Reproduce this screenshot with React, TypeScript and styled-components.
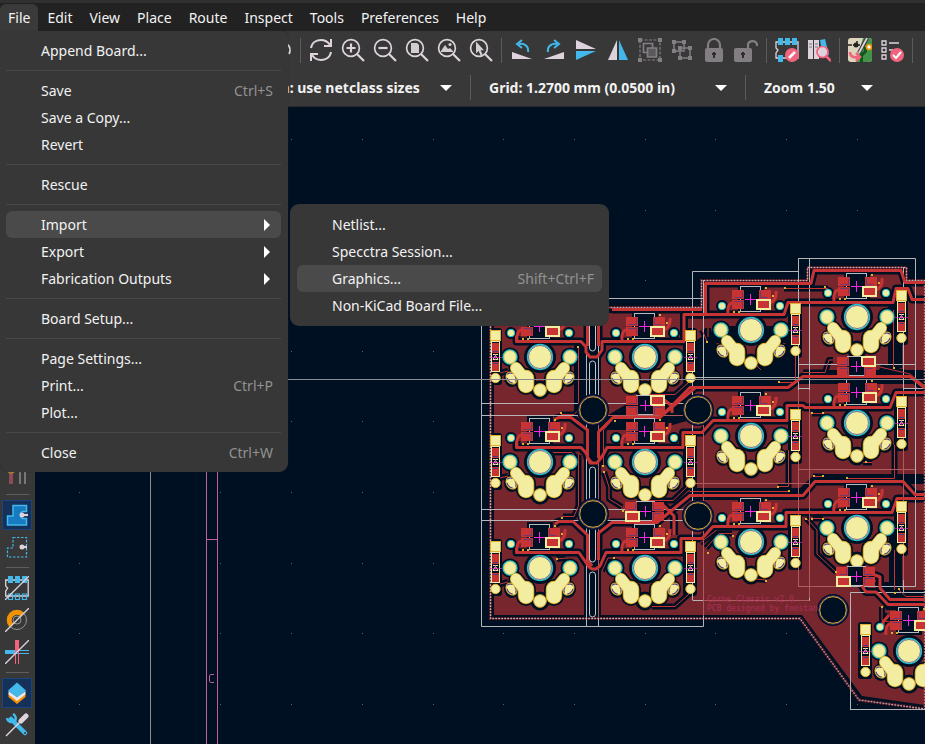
import React from "react";
import styled, { createGlobalStyle, css } from "styled-components";

const GlobalStyle = createGlobalStyle`
  * { box-sizing: border-box; }
  body {
    margin: 0;
    background: #001023;
    font-family: "Noto Sans", "Open Sans", sans-serif;
    font-size: 14px;
    color: #f2f2f2;
  }
  button, select { font: inherit; color: inherit; }
`;

const Page = styled.div`
  position: relative;
  display: flex;
  flex-direction: column;
  height: 100vh;
  overflow: hidden;
`;

const MenuBar = styled.nav`
  display: flex;
  flex: none;
  gap: 1px;
  height: 31px;
  padding-top: 1px;
  border-top: 3px solid #303030;
  background: #222222;
`;

const MenuTab = styled.button<{ $open?: boolean }>`
  border: 0;
  padding: 0 8px;
  line-height: 26px;
  border-radius: 6px 6px 0 0;
  background: ${(p) => (p.$open ? "#3a3a3a" : "transparent")};
`;

const ToolRow = styled.div`
  display: flex;
  flex: none;
  align-items: center;
  height: 38px;
  padding-left: 264px;
  background: #383838;
  overflow: hidden;
`;

const ToolButton = styled.button<{ $dim?: boolean }>`
  display: flex;
  flex: none;
  align-items: center;
  justify-content: center;
  width: 32px;
  height: 32px;
  padding: 0;
  border: 0;
  background: transparent;
  opacity: ${(p) => (p.$dim ? 0.45 : 1)};
`;

const Divider = styled.span`
  flex: none;
  width: 1px;
  height: 25px;
  margin: 0 4px;
  background: #5c5c5c;
`;

const ChoiceRow = styled(ToolRow)`
  padding-left: 254px;
  border-bottom: 1px solid #2b2b2b;
`;

const Choice = styled.label<{ $width: number }>`
  display: flex;
  flex: none;
  align-items: center;
  width: ${(p) => p.$width}px;
  padding: 0 14px;
`;

const ChoiceSelect = styled.select`
  flex: 1;
  min-width: 0;
  padding: 0;
  border: 0;
  appearance: none;
  background: transparent;
  font-weight: 700;
`;

const Work = styled.div`
  display: flex;
  flex: 1;
  min-height: 0;
`;

const SideBar = styled.aside`
  display: flex;
  flex: none;
  flex-direction: column;
  justify-content: flex-end;
  gap: 2px;
  width: 35px;
  padding: 0 2px 4px;
  background: #383838;
`;

const SideButton = styled.button<{ $on?: boolean }>`
  display: flex;
  flex: none;
  align-items: center;
  justify-content: center;
  width: 30px;
  height: 30px;
  padding: 0;
  border: 1px solid ${(p) => (p.$on ? "#1d4478" : "transparent")};
  background: ${(p) => (p.$on ? "#15315a" : "transparent")};
`;

const SideRule = styled.span`
  flex: none;
  height: 1px;
  margin: 3px 4px;
  background: #5e5e5e;
`;

const Canvas = styled.main`
  flex: 1;
  min-width: 0;
  background: #001023;
  svg { display: block; width: 100%; height: 100%; }
`;

const menuPanel = css`
  position: absolute;
  display: flex;
  flex-direction: column;
  background: #373737;
`;

const FileMenu = styled.div`
  ${menuPanel}
  top: 31px;
  left: 0;
  width: 288px;
  padding: 6px 7px 6px 6px;
  border-radius: 0 6px 9px 9px;
  box-shadow: 0 0 1px #222222;
`;

const SubMenu = styled.div`
  ${menuPanel}
  top: -7px;
  left: 284px;
  width: 319px;
  padding: 7px;
  border-radius: 9px;
`;

const ItemWrap = styled.div`
  position: relative;
`;

const Item = styled.button<{ $active?: boolean }>`
  display: flex;
  align-items: center;
  justify-content: space-between;
  width: 100%;
  height: 27px;
  padding: 0 8px 0 35px;
  border: 0;
  border-radius: 6px;
  background: ${(p) => (p.$active ? "#4a4a4a" : "transparent")};
  text-align: left;
  white-space: nowrap;
`;

const Shortcut = styled.span`
  color: #929292;
`;

const MenuRule = styled.hr`
  width: 100%;
  height: 1px;
  margin: 6px 0;
  border: 0;
  background: #484848;
`;

/* ---------- toolbar icons, on a 24 unit grid ---------- */

const PALE = "#ded3dd";
const BLUE = "#42b8eb";
const PINK = "#f2647e";

function Icon({ children }: { children: React.ReactNode }) {
  return (
    <svg width="24" height="24" viewBox="0 0 24 24" fill="none" stroke={PALE} strokeWidth="1.7" aria-hidden="true">
      {children}
    </svg>
  );
}

const Lens = ({ children }: { children?: React.ReactNode }) => (
  <Icon>
    <circle cx="10" cy="10" r="8.4" />
    <path d="M16 16l7 7" strokeWidth="2.2" />
    {children}
  </Icon>
);

const FindIcon = () => (
  <Icon><path d="M19 6a8 8 0 0 1 2 10" strokeWidth="1.8" /></Icon>
);
const RefreshIcon = () => (
  <Icon>
    <path d="M2 10C3 4 8 2 12 2s7 2 9 5M22 14c-1 6-6 8-10 8s-7-2-9-5" strokeWidth="2" />
    <path d="M22 1v7h-7M2 23v-7h7" strokeWidth="2" />
  </Icon>
);
const ZoomInIcon = () => <Lens><path d="M10 5.5v9M5.5 10h9" strokeWidth="2.2" /></Lens>;
const ZoomOutIcon = () => <Lens><path d="M5.5 10h9" strokeWidth="2.2" /></Lens>;
const ZoomPageIcon = () => <Lens><path d="M6 5h6l2 2v8H6z" fill="#cfcfcf" stroke="none" /></Lens>;
const ZoomObjectsIcon = () => (
  <Lens>
    <path d="M4 13l4-6 3 4 2-1 3 3v1H4z" fill="#cfcfcf" stroke="none" />
    <circle cx="13" cy="6.5" r="1.6" fill="#cfcfcf" stroke="none" />
  </Lens>
);
const ZoomSelectIcon = () => (
  <Lens><path d="M7 3.500v12l2.600-2.500 2 4.500 2-1-2-4.200h3.400z" fill="#cfcfcf" stroke="none" /></Lens>
);
const RotateLeftIcon = () => (
  <Icon>
    <path d="M2 14v7h20z" fill={PALE} stroke="none" />
    <path d="M18 14c1-6-4-9-9-8" stroke={BLUE} strokeWidth="2" />
    <path d="M12 2L7 6l5 4" stroke={BLUE} strokeWidth="2" />
  </Icon>
);
const RotateRightIcon = () => (
  <Icon>
    <path d="M22 14v7H2z" fill={PALE} stroke="none" />
    <path d="M6 14c-1-6 4-9 9-8" stroke={BLUE} strokeWidth="2" />
    <path d="M12 2l5 4-5 4" stroke={BLUE} strokeWidth="2" />
  </Icon>
);
const FlipVIcon = () => (
  <Icon>
    <path d="M2 2v9h20z" fill={PALE} stroke="none" />
    <path d="M2 22v-9h20z" fill={BLUE} stroke="none" />
  </Icon>
);
const FlipHIcon = () => (
  <Icon>
    <path d="M2 22h9V2z" fill={PALE} stroke="none" />
    <path d="M22 22h-9V2z" fill={BLUE} stroke="none" />
  </Icon>
);
const GroupIcon = () => (
  <Icon>
    <path d="M2 2h20v20H2z" strokeDasharray="3 1.500" strokeWidth="1.200" />
    <path d="M0 0h4v4H0zM20 0h4v4h-4zM0 20h4v4H0zM20 20h4v4h-4z" fill={PALE} stroke="none" />
    <path d="M5.500 5.500h9v9h-9z" />
    <path d="M9.500 10h9v9h-9z" fill="#858085" />
  </Icon>
);
const UngroupIcon = () => (
  <Icon>
    <path d="M4 4h10v9H4zM10 10h10v10H10z" strokeWidth="1.500" />
    <path d="M2 2h4v4H2zM12 2h4v4h-4zM2 11h4v4H2zM8 8h4v4H8zM18 8h4v4h-4zM8 18h4v4H8zM18 18h4v4h-4z" fill={PALE} stroke="none" />
  </Icon>
);
const LockIcon = () => (
  <Icon>
    <path d="M6 11V7a6 6 0 0 1 12 0v4" strokeWidth="2.200" />
    <rect x="3" y="10" width="18" height="14" rx="2" fill={PALE} stroke="none" />
    <path d="M12 14v6M10 16h4" stroke="#222222" strokeWidth="2" />
  </Icon>
);
const UnlockIcon = () => (
  <Icon>
    <path d="M14 11V6a5 5 0 0 1 9 0v2" strokeWidth="2.200" />
    <rect x="0" y="10" width="18" height="14" rx="2" fill={PALE} stroke="none" />
    <path d="M9 14v6M7 16h4" stroke="#222222" strokeWidth="2" />
  </Icon>
);
const FootprintEditIcon = () => (
  <Icon>
    <path d="M1 4v6l2 2-2 3v5h22V4z" strokeWidth="1.300" />
    <path d="M3 0h5v7H3zM10 0h5v7h-5zM17 0h5v7h-5zM3 17h5v7H3z" fill={BLUE} stroke="none" />
    <circle cx="17" cy="17" r="7" fill={PINK} stroke="none" />
    <path d="M14 20l6-6" stroke="#ffffff" strokeWidth="2.600" />
  </Icon>
);
const LibraryIcon = () => (
  <Icon>
    <path d="M1 2h5v19H1zM7 2h5v19H7z" fill={PALE} stroke="none" />
    <path d="M13 2l5-1 4 16-6 3z" fill={BLUE} stroke="none" />
    <path d="M2 6h3M8 6h3M2 9h3M8 9h3" stroke="#777777" strokeWidth="1" />
    <path d="M19 18l5 5" stroke={PINK} strokeWidth="2.500" />
    <circle cx="15.500" cy="14" r="5.500" fill="#ded3dd" stroke={PINK} />
  </Icon>
);
const UpdateBoardIcon = () => (
  <Icon>
    <rect width="24" height="24" rx="3" fill="#ddd5bd" stroke="none" />
    <path d="M15 0h6a3 3 0 0 1 3 3v18a3 3 0 0 1-3 3H8z" fill="#43924a" stroke="none" />
    <path d="M16 9v4l-4 3v8h3v-6l4-4V9z" fill="#0b5a17" stroke="none" />
    <path d="M0 7h4M5 7h7M9 3v5" stroke="#222222" strokeWidth="1.500" />
    <circle cx="8" cy="7" r="2.500" fill="#222222" stroke="none" />
    <path d="M19 0l-8 15" stroke="#3b3b3b" strokeWidth="4" />
    <path d="M19 0l-8 15" strokeWidth="1.800" />
    <circle cx="21" cy="9" r="2.500" fill="#ffffff" stroke="#f39200" />
    <path d="M2 14c0 5 4 6 9 5M8 15l4 4-4 4" stroke={PINK} strokeWidth="2.600" />
  </Icon>
);
const DrcIcon = () => (
  <Icon>
    <path d="M2 3h4v4H2zM2 10h4v4H2zM2 17h4v4H2z" strokeWidth="1.300" />
    <path d="M9 5h10M9 12h4" />
    <circle cx="17" cy="17" r="7" fill={PINK} stroke="none" />
    <path d="M13 17l3 3 5-6" stroke="#ffffff" strokeWidth="2" />
  </Icon>
);

/* ---------- side bar icons ---------- */

const LayersContrastIcon = () => (
  <Icon>
    <path d="M6 6v16" stroke="#8e4a57" strokeWidth="4" />
    <path d="M15 6v16M20 6v16" stroke="#777777" strokeWidth="2" />
    <path d="M2 9h21" stroke="#3c7188" strokeWidth="2" />
    <circle cx="6" cy="8" r="3" stroke="#b18432" fill="#695740" />
  </Icon>
);
const ZoneFillIcon = () => (
  <Icon>
    <path d="M8 2.500h13.500v6h-4a4 4 0 0 0 0 7h4V22H2.500v-9H8z" fill="#167bc1" stroke={BLUE} strokeWidth="1.500" />
    <circle cx="17" cy="12" r="2.500" fill={PALE} stroke="none" />
    <path d="M17 12h6" strokeWidth="2.200" />
  </Icon>
);
const ZoneOutlineIcon = () => (
  <Icon>
    <path d="M8 2.500h13.500V22H2.500v-9H8z" stroke={BLUE} strokeWidth="1.200" strokeDasharray="2.500 1.500" />
    <circle cx="17" cy="12" r="2.500" fill={PALE} stroke="none" />
    <path d="M17 12h5" strokeWidth="2.200" />
  </Icon>
);
const PadsSketchIcon = () => (
  <Icon>
    <path d="M.700 4v6l2 2-2 3v5h22.500V4z" strokeWidth="1.300" />
    <path d="M3 0h5v7H3zM10 0h5v7h-5zM17 0h5v7h-5z" fill={BLUE} stroke="none" />
    <path d="M3.500 18h4v5.500h-4zM10.500 18h4v5.500h-4zM17.500 18h4v5.500h-4z" stroke={BLUE} strokeWidth="1.200" />
    <path d="M0 24L24 0" strokeWidth="1.300" />
  </Icon>
);
const ViasSketchIcon = () => (
  <Icon>
    <circle cx="12" cy="12" r="9.500" stroke="#929292" strokeWidth="1" />
    <circle cx="12" cy="12" r="4" stroke="#929292" strokeWidth="1" />
    <path d="M6.500 17.500a7.500 7.500 0 0 1 11-11" stroke="#f39200" strokeWidth="5" />
    <path d="M0 24L24 0" strokeWidth="1.300" />
  </Icon>
);
const TracksSketchIcon = () => (
  <Icon>
    <path d="M0 12h12" stroke={BLUE} strokeWidth="4" />
    <path d="M12 10.500h12M12 13.500h12" stroke={BLUE} strokeWidth="1" />
    <path d="M12 0v12" stroke={PINK} strokeWidth="4" />
    <path d="M10.500 12v12M13.500 12v12" stroke={PINK} strokeWidth="1" />
    <path d="M0 24L24 0" strokeWidth="1.300" />
  </Icon>
);
const LayersIcon = () => (
  <Icon>
    <path d="M3.500 13v3l8.500 7 8.500-7v-3L12 19z" fill="#f39200" stroke="none" />
    <path d="M3.500 10v3.500L12 20l8.500-6.500V10L12 16z" fill="#ece6eb" stroke="none" />
    <path d="M12 1.500l9 8L12 16.500 3 9.500z" fill={BLUE} stroke="none" />
  </Icon>
);
const ToolsIcon = () => (
  <Icon>
    <path d="M6 6l14 14" stroke={BLUE} strokeWidth="4.500" strokeLinecap="round" />
    <path d="M2 5a5 5 0 0 0 8 3 5 5 0 0 0-2-7" stroke={BLUE} strokeWidth="2.500" />
    <circle cx="20" cy="20" r="1" fill="#383838" stroke="none" />
    <path d="M1 23L16 8" strokeWidth="1.500" />
    <path d="M16 8l5-5" strokeWidth="5" strokeLinecap="round" />
  </Icon>
);

const Caret = () => (
  <svg width="12" height="6" viewBox="0 0 12 6" aria-hidden="true"><path d="M0 0h12L6 6z" fill="#ffffff" /></svg>
);
const SubArrow = () => (
  <svg width="12" height="12" viewBox="0 0 12 12" aria-hidden="true"><path d="M3 0v12l6-6z" fill="#ffffff" /></svg>
);

/* ---------- circuit board ---------- */

const NAVY = "#001023";
const COPPER = "#78262e";
const TRACK = "#c83434";
const CREAM = "#f2eda1";
const GOLD = "#e0b02c";
const CYAN = "#1cc3d1";
const VIOLET = "#4b3a8a";
const MAGENTA = "#ff26e2";

type KeySpec = { x: number; y: number; diode: number };

const KEYS: KeySpec[] = [
  { x: 540, y: 357, diode: -45 },
  { x: 540, y: 462, diode: -45 },
  { x: 540, y: 568, diode: -45 },
  { x: 645, y: 357, diode: 45 },
  { x: 645, y: 462, diode: 45 },
  { x: 645, y: 568, diode: 45 },
  { x: 751, y: 330, diode: 44 },
  { x: 751, y: 436, diode: 44 },
  { x: 751, y: 542, diode: 44 },
  { x: 857, y: 317, diode: 44 },
  { x: 857, y: 423, diode: 44 },
  { x: 857, y: 528, diode: 44 },
  { x: 909, y: 651, diode: -44 },
];

/* Half of the hot-swap socket land, mirrored for the other side. */
const LEG_BLOB = "M14 21V28";
const LEG_ARM = "M24 11L16 21";

function KeyClearance({ x, y, diode }: KeySpec) {
  const legs = (
    <>
      <path d={LEG_BLOB} strokeWidth="20" />
      <path d={LEG_ARM} strokeWidth="15" />
      <ellipse cx="28" cy="21" rx="8" ry="9" fill={NAVY} stroke="none" />
    </>
  );
  return (
    <g transform={`translate(${x} ${y})`} fill={NAVY} stroke={NAVY} strokeLinecap="round">
      <g stroke="none">
        <circle r="16" />
        <circle cx="-30" r="9.500" />
        <circle cx="30" r="9.500" />
        <circle cx="-29" cy="-24" r="6" />
        <circle cx="29" cy="-24" r="6" />
        <circle cy="33" r="9.500" />
        <rect x="-13" y="-46" width="26" height="30" />
        <rect x={diode - 7} y="-29" width="14" height="57" rx="3" />
      </g>
      <g fill="none">{legs}</g>
      <g fill="none" transform="scale(-1 1)">{legs}</g>
    </g>
  );
}

function Leg() {
  return (
    <g strokeLinecap="round">
      <ellipse cx="28.500" cy="21" rx="5" ry="6.500" transform="rotate(35 28.500 21)" fill={CREAM} stroke={GOLD} />
      <ellipse cx="28.500" cy="21" rx="4" ry="5.500" transform="rotate(35 28.500 21)" fill="none" stroke={VIOLET} strokeDasharray="5 4" />
      <g fill="none" stroke={GOLD}>
        <path d={LEG_BLOB} strokeWidth="16.500" />
        <path d={LEG_ARM} strokeWidth="12" />
      </g>
      <g fill="none" stroke={CREAM}>
        <path d={LEG_BLOB} strokeWidth="14.500" />
        <path d={LEG_ARM} strokeWidth="10.500" />
      </g>
    </g>
  );
}

function Diode({ x }: { x: number }) {
  return (
    <g transform={`translate(${x} 0)`}>
      <rect x="-4.500" y="-26.500" width="10" height="10" fill={CREAM} stroke={GOLD} />
      <rect x="-3.500" y="-15.500" width="8" height="30" fill={NAVY} stroke={CREAM} />
      <rect x="-3" y="-14" width="7" height="10" fill={TRACK} />
      <rect x="-3" y="5" width="7" height="9" fill={TRACK} />
      <path d="M-2-5.500h5M-2 6.500h5" stroke={VIOLET} />
      <path d="M-2 2.500L.500-1.500L3 2.500zM-2-2.500h5" stroke={CREAM} fill="none" />
      <path d="M-6 .500H7M.500-3V3" stroke={MAGENTA} strokeOpacity="0.55" />
      <circle cx=".500" cy="21" r="4.700" fill={CREAM} stroke={GOLD} />
    </g>
  );
}

function LedPads({ flip }: { flip?: boolean }) {
  return (
    <g transform={flip ? "scale(-1 1)" : undefined}>
      <g fill={TRACK}>
        <rect x="-19" y="-9" width="12" height="9" />
        <rect x="-19" y="1" width="12" height="9" />
        <rect x="8" y="-9" width="12" height="9" />
      </g>
      <path d="M-16.500-1.500h8v-6M-16.500 2.500h8v6M9.500-7.500v6h7" fill="none" stroke={VIOLET} strokeOpacity="0.75" />
      <rect x="6" y="1" width="13" height="9" fill={TRACK} stroke={CREAM} strokeWidth="2" />
    </g>
  );
}

function Key({ x, y, diode }: KeySpec) {
  return (
    <g transform={`translate(${x} ${y})`}>
      <path d="M-19-27q-5 1-4 11M19-27q7-3 6-12" fill="none" stroke={TRACK} strokeWidth="3" />
      <rect x="-10.500" y="-43.500" width="20" height="25" fill={NAVY} stroke="#b6b9bd" />
      <g transform="translate(0 -31)">
        <LedPads />
        <path d="M-6 .500H5M-.500-5V6" stroke={MAGENTA} />
      </g>
      <g fill={GOLD}>
        <rect x="-18" y="-19" width="2" height="2" />
        <rect x="-13" y="-19" width="2" height="2" />
        <rect x="14" y="-43" width="2" height="2" />
        <rect x="21" y="-35" width="2" height="2" />
      </g>
      <circle r="12.500" fill={CREAM} stroke={CYAN} strokeWidth="1.300" />
      <circle r="11.500" fill={CREAM} stroke={VIOLET} strokeWidth="0.700" />
      {[-30, 30].map((cx) => (
        <g key={cx}>
          <circle cx={cx} r="7" fill={CREAM} stroke={CYAN} strokeWidth="1.300" />
          <ellipse cx={cx} rx="6" ry="6.500" fill={CREAM} stroke={GOLD} strokeWidth="0.500" />
          <circle cx={cx > 0 ? 29 : -29} cy="-24" r="3.700" fill={CREAM} stroke={CYAN} />
        </g>
      ))}
      <Leg />
      <g transform="scale(-1 1)"><Leg /></g>
      <circle cy="33" r="6.300" fill={CREAM} stroke={GOLD} />
      <Diode x={diode} />
    </g>
  );
}

function UnderLed({ x, y, lower }: { x: number; y: number; lower?: boolean }) {
  return (
    <g transform={`translate(${x} ${y})`}>
      <rect x="-9" y="-10" width="19" height="19" fill={NAVY} />
      <path d="M-9-9.500H10M-9 9.500H10" stroke="#b6b9bd" />
      <g transform={lower ? undefined : "translate(0 1) scale(1 -1)"}><LedPads flip={lower} /></g>
      <path d="M-5 .500H6M.500-5V6" stroke={MAGENTA} />
    </g>
  );
}

const BOARD =
  "M490.500 307.500H701.500V280.500H807.500V267.500H906.500V280.500H925V709L859 700L800 618.500H490.500Z";
const COPPER_AREA =
  "M494 313H706V286H812V273H902V286H925V705L862 696L802 615H494Z";

const TRACKS = [
  "M612 309.500H702",
  "M516.500 336V341.500H581L586 347V352L590 357H597L602 350V341.500H684V314.500H705.500V283.500H811L814 270.500H901L905 282.500H925",
  "M516.500 441V447.500H581L586 453L590 463H597L603 455L607 447.500H683V432.500H702L713 420.500H787V405.500H803L805 407.500H890L896 392.500H925",
  "M516.500 548V552.500H579L589 567L592 569H596L600 566L606 552.500H681V538.500H702L713 526.500H786V512.500H892L897 498.500H925",
  "M555 419L559 417.500H571L587.500 430V458L592 463",
  "M598.500 458V432L613 417.500H660L690 387.500H788L803 376.500H910L925 388",
  "M555 524L559 521.500H573L587.500 535V560L592 566",
  "M598.500 560V533L612 522.500H657L690 495.500H803L815 481.500H903L915 494.500H925",
  "M690 314.500H784L788 302.500H893L896 288.500H908L912 299.500H925",
  "M587.500 315V346M598.500 315V346",
  "M663 399L672 406V413M660 417L695 388",
  "M663 505L674 516V535",
  "M870 573L880 577V588L890 599.500H925",
  "M858 580L866 592H876L888 604.500H925",
  "M883 627V622L889 615",
];

const THIN_TRACKS = [
  "M578.500 347V410L574 414.500H561",
  "M578.500 455V506L574 516.500H563",
  "M640 394.500H675L688 383V330",
  "M603.500 465V430L612 420",
  "M604 472L609 487V499L622 507",
  "M645 500.500H673L687 487V440",
  "M652 606.500H675L689 594",
  "M707 341L702 330M708 337V328",
  "M784 288.500H828",
  "M795.500 350V382.500H778",
  "M893.500 310V367M880 367L910 374L925 386",
  "M803 372.500H825L829 360H833",
  "M806 518L817 530V554L836 572",
  "M894.500 445V478.500H848",
  "M894.500 550V590M899 590L906 596.500H925",
  "M690 491.500H788",
  "M788.500 450V486.500H778",
  "M706 548L719 533.500H732M700 543L716 530.500",
  "M812 413.500H823M813 476.500H823M813 518.500H823",
  "M557 559L566 558M614 558H608L602 571",
  "M882 607V620L896 624",
  "M553 452.500H572L576 458M500 478L508 476M500 373L508 371M500 584L508 582",
  "M756 579L766 580M863 462.500H872M757 366L761 370",
];

const COURTYARDS =
  "M481.500 298.500H703.500V626.500H481.500ZM586.500 298V626M598.500 298V626M481 403.500H703M481 415.500H703M481 509.500H703M481 520.500H703" +
  "M692.500 600V271.500H798.500V258.500H915.500V586.500H798.500V258M809.500 258V600.500H692.500M703.500 280V626M903.500 592V267" +
  "M692 377.500H800M798 364.500H915M798 388.500H809M903 388.500H925M692 483.500H809M798 469.500H915M850.500 709.500V592.500H925M850 709.500H925";

const HOLES = [
  [593, 410],
  [593, 514],
  [698, 410],
  [698, 516],
  [833, 610],
];

const SLOTS = [
  [300, 51],
  [361, 40],
  [467, 40],
  [526, 36],
  [572, 45],
];

const GRID_COLS = Array.from({ length: 13 }, (_, i) => Math.round(79 + i * 70.7));
const GRID_ROWS = Array.from({ length: 9 }, (_, i) => Math.round(139 + i * 70.6));

function Board() {
  return (
    <svg role="img" aria-label="Corne Classic circuit board">
      <g transform="translate(-35 -107)">
        {GRID_ROWS.map((gy) =>
          GRID_COLS.map((gx) => <rect key={`${gx}-${gy}`} x={gx} y={gy} width="1" height="1" fill="#59636b" />)
        )}
        <path d="M150.500 107V1000" stroke="#8b8d90" />
        <path d="M206.500 107V1000M217.500 107V1000M206 539.500H217" stroke="#bd62a0" />
        <path d="M214 674.500H210.500L209.500 676V681L210.500 682.500H214" stroke="#bd62a0" fill="none" />

        <path d={COPPER_AREA} fill={COPPER} />
        <g fill={NAVY}>
          <path d="M704 335L722 326H781L794 340V383H690V345Z" />
          <rect x="584" y="307" width="17" height="311" />
          <rect x="574" y="343" width="10" height="70" />
          <path d="M600 420L640 396H690V420L655 430H600Z" />
          <path d="M690 380H800L812 370H925V384H690Z" />
          <path d="M690 488H800L815 474H925V484H812L800 500H690Z" />
          <rect x="888" y="300" width="14" height="68" />
          <path d="M874 582H890L900 590H925V610H886Z" />
          <rect x="889" y="535" width="13" height="60" />
        </g>
        <path d="M716 343H786L776 352L762 350L751 358L738 350L722 350Z" fill={COPPER} />
        <g fill="none" stroke={NAVY} strokeWidth="8" strokeLinejoin="round">
          {TRACKS.map((d) => <path key={d} d={d} />)}
        </g>
        <g fill="none" stroke={NAVY} strokeWidth="6" strokeLinejoin="round">
          {THIN_TRACKS.map((d) => <path key={d} d={d} />)}
        </g>
        {KEYS.map((k) => <KeyClearance key={`${k.x}-${k.y}`} {...k} />)}

        <path d={BOARD} fill="none" stroke={TRACK} strokeOpacity="0.6" strokeWidth="3" strokeDasharray="2 1" />
        <path d={BOARD} fill="none" stroke="#d3c4c6" strokeOpacity="0.85" strokeDasharray="2 1" />
        <path d={COURTYARDS} fill="none" stroke="#b3b5b8" />
        <path d="M598.500 618V415.500H703M809.500 390V598M692.500 483.500H809M798 469.500H915M798.500 390V586.500H845M903.500 390V580M703.500 600.500H809M703.500 420V616" fill="none" stroke="#b05a5e" />

        <g fill="none" stroke={TRACK} strokeWidth="3" strokeLinejoin="round">
          {TRACKS.map((d) => <path key={d} d={d} />)}
        </g>
        <g fill="none" stroke={TRACK}>
          {THIN_TRACKS.map((d) => <path key={d} d={d} />)}
        </g>

        {SLOTS.map(([sy, h]) => (
          <rect key={sy} x="589.500" y={sy} width="6" height={h} rx="3" fill={NAVY} stroke="#c6c9cc" />
        ))}
        {KEYS.map((k) => <Key key={`${k.x}-${k.y}`} {...k} />)}
        <UnderLed x={645} y={405} />
        <UnderLed x={645} y={511} lower />
        <UnderLed x={856} y={366} />
        <UnderLed x={856} y={576} lower />
        {HOLES.map(([hx, hy]) => (
          <g key={`${hx}-${hy}`} fill={NAVY}>
            <circle cx={hx} cy={hy} r="16" />
            <circle cx={hx} cy={hy} r="14.200" stroke={VIOLET} />
            <circle cx={hx} cy={hy} r="13.300" stroke={GOLD} />
          </g>
        ))}
        <g fill={GOLD}>
          {[[577, 346], [560, 412], [561, 517], [602, 465], [688, 381], [614, 420], [603, 471], [622, 510], [784, 287], [824, 286], [706, 341], [778, 381], [893, 367], [805, 518], [835, 571], [846, 477], [894, 592], [898, 588], [811, 412], [822, 412], [813, 475], [822, 475], [811, 518], [822, 518], [788, 490], [777, 486], [732, 535], [707, 552], [881, 606], [865, 461], [765, 580], [556, 558], [613, 557]].map(([vx, vy]) => (
            <rect key={`${vx}-${vy}`} x={vx} y={vy} width="2" height="2" />
          ))}
        </g>
        <g fill="#a82f5a" fontFamily='"DejaVu Sans Mono", monospace' fontSize="8">
          <text x="707" y="602">Corne Classic v2.0</text>
          <text x="707" y="611">PCB designed by foostan</text>
        </g>
        <path d="M35 379.500H2000" stroke="#8d8d90" />
      </g>
    </svg>
  );
}

/* ---------- data ---------- */

const TABS = ["File", "Edit", "View", "Place", "Route", "Inspect", "Tools", "Preferences", "Help"];

type Tool = { label: string; icon: React.ComponentType; dim?: boolean; on?: boolean } | null;

const TOOLS: Tool[] = [
  { label: "Find", icon: FindIcon },
  null,
  { label: "Refresh", icon: RefreshIcon },
  { label: "Zoom in", icon: ZoomInIcon },
  { label: "Zoom out", icon: ZoomOutIcon },
  { label: "Zoom to page", icon: ZoomPageIcon },
  { label: "Zoom to objects", icon: ZoomObjectsIcon },
  { label: "Zoom to selection", icon: ZoomSelectIcon },
  null,
  { label: "Rotate counterclockwise", icon: RotateLeftIcon },
  { label: "Rotate clockwise", icon: RotateRightIcon },
  { label: "Mirror vertically", icon: FlipVIcon },
  { label: "Mirror horizontally", icon: FlipHIcon },
  { label: "Group", icon: GroupIcon, dim: true },
  { label: "Ungroup", icon: UngroupIcon, dim: true },
  { label: "Lock", icon: LockIcon, dim: true },
  { label: "Unlock", icon: UnlockIcon, dim: true },
  null,
  { label: "Footprint editor", icon: FootprintEditIcon },
  { label: "Footprint library", icon: LibraryIcon },
  null,
  { label: "Update board from schematic", icon: UpdateBoardIcon },
  { label: "Design rules checker", icon: DrcIcon },
  null,
];

const SIDE_TOOLS: Tool[] = [
  { label: "Dim inactive layers", icon: LayersContrastIcon },
  null,
  { label: "Filled zones", icon: ZoneFillIcon, on: true },
  { label: "Zone outlines", icon: ZoneOutlineIcon },
  null,
  { label: "Sketch pads", icon: PadsSketchIcon },
  { label: "Sketch vias", icon: ViasSketchIcon },
  { label: "Sketch tracks", icon: TracksSketchIcon },
  null,
  { label: "Layers manager", icon: LayersIcon, on: true },
  { label: "Properties", icon: ToolsIcon },
];

const CHOICES = [
  { name: "Via size", value: "Via: use netclass sizes", width: 212 },
  { name: "Grid", value: "Grid: 1.2700 mm (0.0500 in)", width: 266 },
  { name: "Zoom", value: "Zoom 1.50", width: 137 },
];

type Entry = { label: string; keys?: string; sub?: Entry[]; arrow?: boolean; active?: boolean } | null;

const FILE_MENU: Entry[] = [
  { label: "Append Board..." },
  null,
  { label: "Save", keys: "Ctrl+S" },
  { label: "Save a Copy..." },
  { label: "Revert" },
  null,
  { label: "Rescue" },
  null,
  {
    label: "Import",
    arrow: true,
    active: true,
    sub: [
      { label: "Netlist..." },
      { label: "Specctra Session..." },
      { label: "Graphics...", keys: "Shift+Ctrl+F", active: true },
      { label: "Non-KiCad Board File..." },
    ],
  },
  { label: "Export", arrow: true },
  { label: "Fabrication Outputs", arrow: true },
  null,
  { label: "Board Setup..." },
  null,
  { label: "Page Settings..." },
  { label: "Print...", keys: "Ctrl+P" },
  { label: "Plot..." },
  null,
  { label: "Close", keys: "Ctrl+W" },
];

function Entries({ items }: { items: Entry[] }) {
  return (
    <>
      {items.map((it, i) =>
        it === null ? (
          <MenuRule key={i} />
        ) : (
          <ItemWrap key={it.label}>
            <Item role="menuitem" $active={it.active}>
              {it.label}
              {it.keys && <Shortcut>{it.keys}</Shortcut>}
              {it.arrow && <SubArrow />}
            </Item>
            {it.sub && <SubMenu role="menu"><Entries items={it.sub} /></SubMenu>}
          </ItemWrap>
        )
      )}
    </>
  );
}

export default function App() {
  return (
    <>
      <GlobalStyle />
      <Page>
        <MenuBar>
          {TABS.map((t, i) => <MenuTab key={t} $open={i === 0}>{t}</MenuTab>)}
        </MenuBar>
        <ToolRow>
          {TOOLS.map((t, i) =>
            t ? <ToolButton key={i} aria-label={t.label} $dim={t.dim}><t.icon /></ToolButton> : <Divider key={i} />
          )}
        </ToolRow>
        <ChoiceRow>
          {CHOICES.map((c, i) => (
            <React.Fragment key={c.name}>
              {i > 0 && <Divider />}
              <Choice $width={c.width}>
                <ChoiceSelect aria-label={c.name}><option>{c.value}</option></ChoiceSelect>
                <Caret />
              </Choice>
            </React.Fragment>
          ))}
        </ChoiceRow>
        <Work>
          <SideBar>
            {SIDE_TOOLS.map((t, i) =>
              t ? <SideButton key={i} aria-label={t.label} $on={t.on}><t.icon /></SideButton> : <SideRule key={i} />
            )}
          </SideBar>
          <Canvas><Board /></Canvas>
        </Work>
        <FileMenu role="menu"><Entries items={FILE_MENU} /></FileMenu>
      </Page>
    </>
  );
}
